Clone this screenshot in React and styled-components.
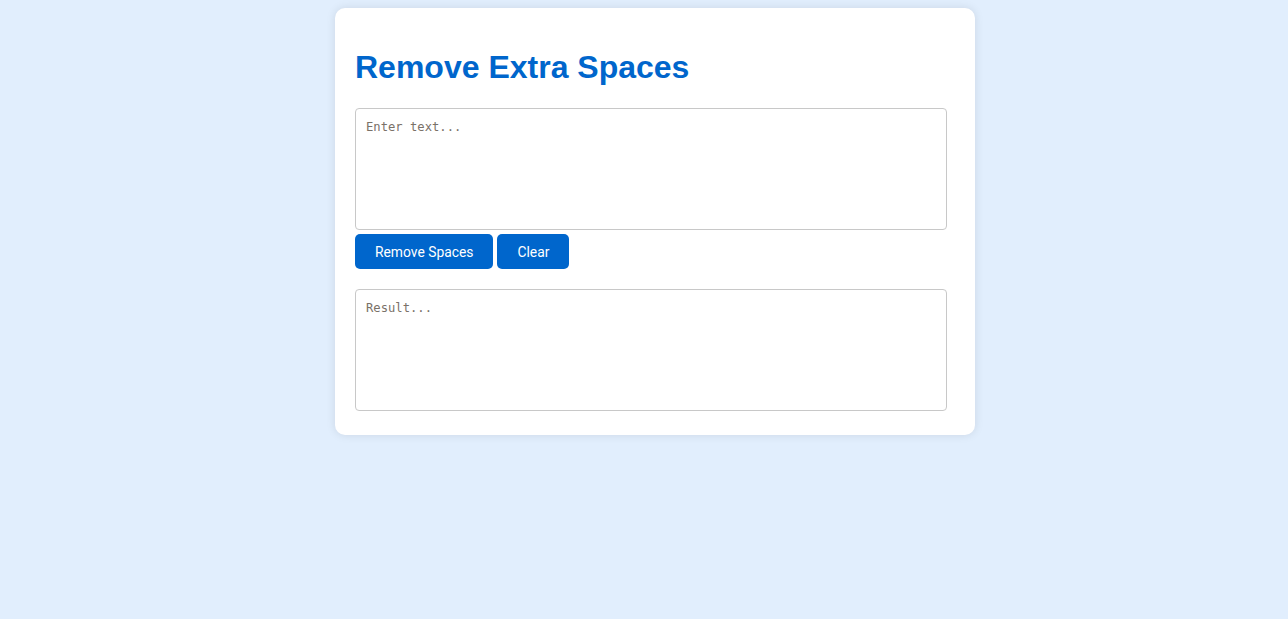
import { useState } from 'react';
import styled, { createGlobalStyle } from 'styled-components';

const GlobalStyle = createGlobalStyle`
  html, body {
    margin: 0;
    padding: 0;
    background: #e1eefd;
    min-height: 100%;
  }
  body {
    font-family: "Liberation Sans", Arial, sans-serif;
  }
`

const Page = styled.div`
  display: flex;
  justify-content: center;
  padding: 8px 0 0 22px;
  min-height: 619px;
  box-sizing: border-box;
`

const Card = styled.div`
  width: 600px;
  height: 387px;
  padding: 20px;
  background: #fff;
  border-radius: 10px;
  box-shadow: 0 0 10px rgba(0, 0, 0, 0.1);
`

const Title = styled.h1`
  margin: 21px 0 22px;
  font-family: "Liberation Sans", Arial, sans-serif;
  font-size: 32px;
  line-height: 37px;
  font-weight: bold;
  color: #0066cc;
`

const TextBox = styled.textarea`
  display: block;
  width: 570px;
  height: 100px;
  padding: 10px;
  margin: ${({ $gap }) => $gap || 0};
  border: 1px solid #c8c8c8;
  border-radius: 4px;
  font-family: "DejaVu Sans Mono", monospace;
  font-size: 12.2px;
  line-height: 17px;
  color: #222;
  resize: none;
  outline: none;

  &::placeholder {
    color: #7a7168;
  }
`

const Actions = styled.div`
  display: flex;
  gap: 4px;
  margin-top: 4px;
`

const Button = styled.button`
  height: 35px;
  padding: 0 20px;
  border: none;
  border-radius: 5px;
  background: #0066cc;
  color: #fff;
  font-family: Roboto, "Liberation Sans", sans-serif;
  font-size: 13.85px;
  cursor: pointer;
`

export default function App() {
  const [text, setText] = useState('')
  const [result, setResult] = useState('')

  function handleRemove() {
    setResult(text.replace(/\s+/g, ' ').trim())
  }

  function handleClear() {
    setText('')
    setResult('')
  }

  return (
    <>
      <GlobalStyle />
      <Page>
        <Card>
          <Title>Remove Extra Spaces</Title>
          <TextBox placeholder="Enter text..." value={text} onChange={e => setText(e.target.value)} />
          <Actions>
            <Button onClick={handleRemove}>Remove Spaces</Button>
            <Button onClick={handleClear}>Clear</Button>
          </Actions>
          <TextBox $gap="20px 0 0" placeholder="Result..." value={result} readOnly />
        </Card>
      </Page>
    </>
  )
}
